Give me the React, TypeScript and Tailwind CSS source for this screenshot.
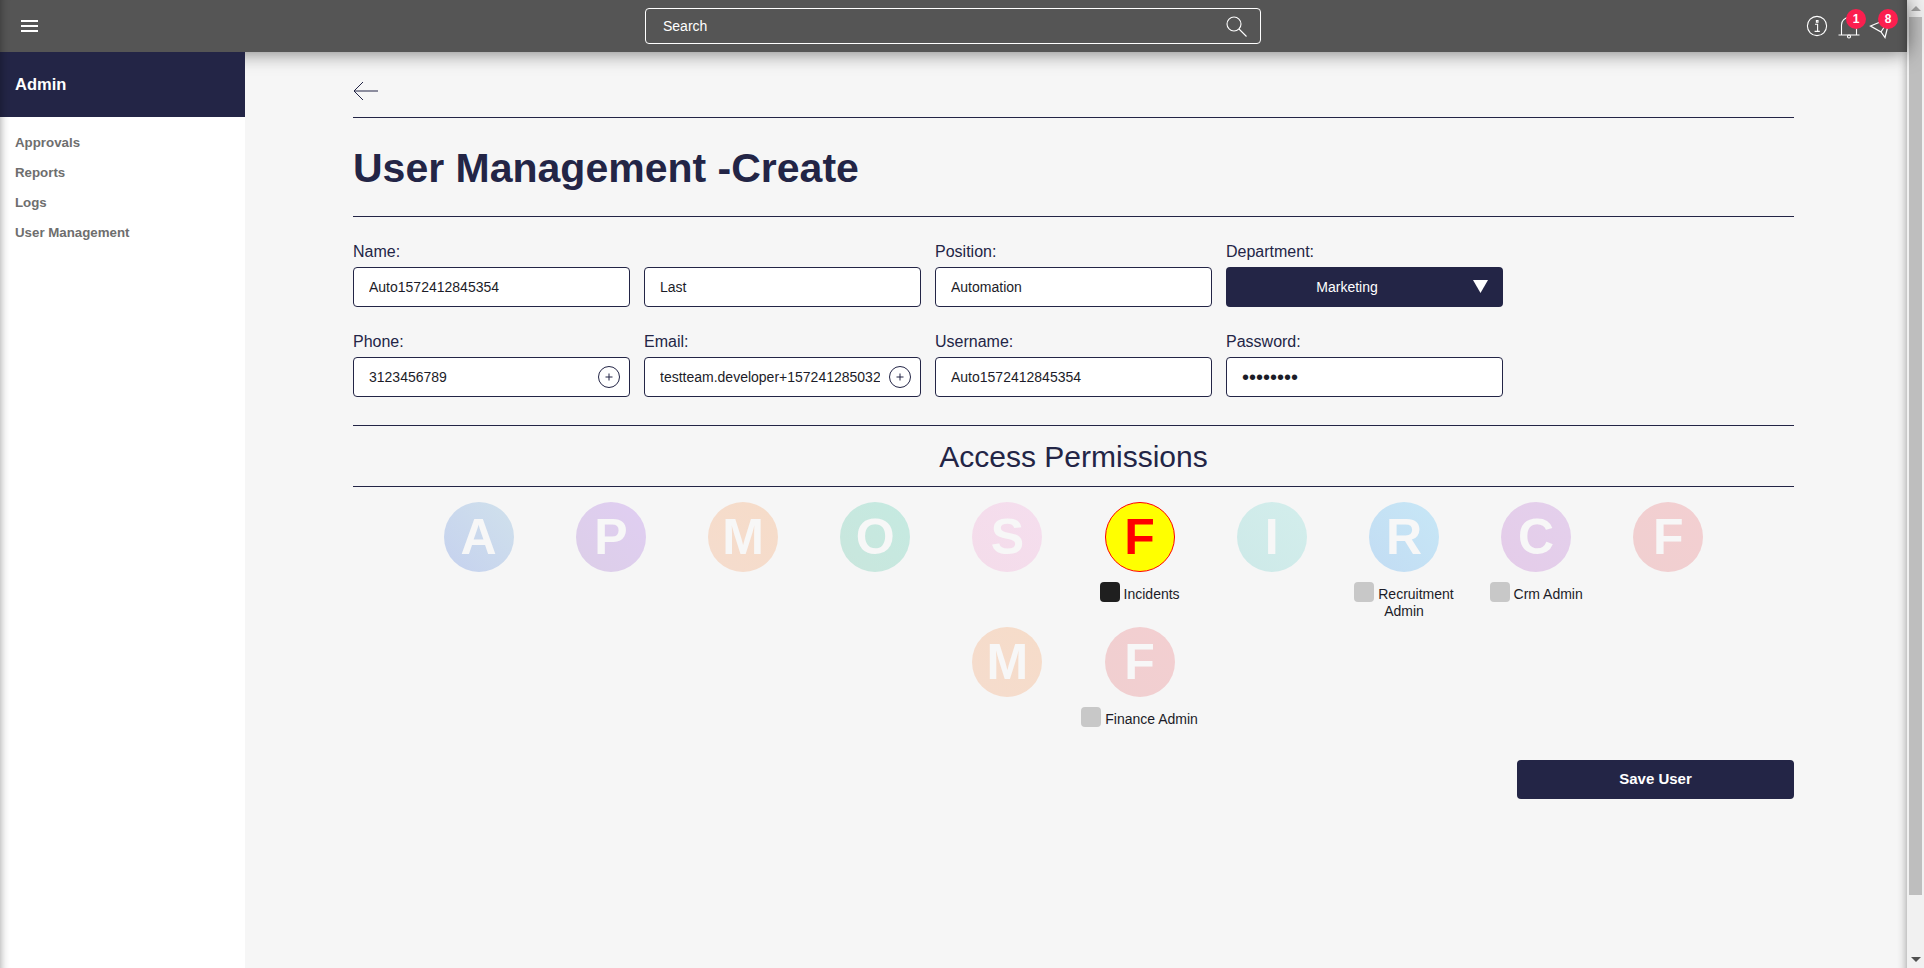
const navy = "#232546";

const circles = [
  { letter: "A", bg: "bg-linear-to-tr from-[#c5d1ee] to-[#d0e1ec]" },
  { letter: "P", bg: "bg-linear-to-tr from-[#dccee8] to-[#e0cef2]" },
  { letter: "M", bg: "bg-linear-to-tr from-[#f5dccd] to-[#f6dcc9]" },
  { letter: "O", bg: "bg-linear-to-tr from-[#c9e6dd] to-[#c5eae1]" },
  { letter: "S", bg: "bg-linear-to-tr from-[#f4dcea] to-[#f5deee]" },
  { letter: "F", selected: true, label: "Incidents", checked: true },
  { letter: "I", bg: "bg-linear-to-tr from-[#cde9e8] to-[#d3eeec]" },
  { letter: "R", bg: "bg-linear-to-tr from-[#c2dcf3] to-[#c7e7f6]", label: "Recruitment Admin" },
  { letter: "C", bg: "bg-linear-to-tr from-[#e4cce9] to-[#e4d0ec]", label: "Crm Admin" },
  { letter: "F", bg: "bg-linear-to-tr from-[#f0cfd0] to-[#f3cfd1]" },
  { letter: "M", bg: "bg-linear-to-tr from-[#f5dccd] to-[#f6dcc9]" },
  { letter: "F", bg: "bg-linear-to-tr from-[#f0cfd0] to-[#f3cfd1]", label: "Finance Admin" },
];

function Field({ label, value, plus, big }: { label?: string; value: string; plus?: boolean; big?: boolean }) {
  return (
    <div>
      <div className="h-[25px] pt-px text-base leading-[18px] text-[#232546]">{label}</div>
      <div
        className={
          big
            ? "flex h-10 items-center rounded border border-[#232546] bg-white pl-[15px] pr-[9px] text-[20px] text-[#1c1c28]"
            : "flex h-10 items-center rounded border border-[#232546] bg-white pl-[15px] pr-[9px] text-sm text-[#1c1c28]"
        }
      >
        <div className="min-w-0 flex-1 overflow-hidden whitespace-nowrap">{value}</div>
        {plus && (
          <div className="ml-[9px] flex h-[22px] w-[22px] shrink-0 items-center justify-center rounded-full border border-[#232546]">
            <svg width="10" height="10" viewBox="0 0 10 10" stroke={navy} strokeWidth="1">
              <path d="M5 1.5v7M1.5 5h7" />
            </svg>
          </div>
        )}
      </div>
    </div>
  );
}

function Badge({ n }: { n: number }) {
  return (
    <div className="absolute right-[-6px] top-[-6px] flex h-5 w-5 items-center justify-center rounded-full bg-[#fb1f4f] text-xs font-bold text-white">
      {n}
    </div>
  );
}

export default function App() {
  return (
    <div className="relative flex h-screen overflow-hidden bg-[#f6f6f6] font-['Liberation_Sans',Arial,sans-serif]">
      <div className="flex min-w-0 flex-1 flex-col">
        <header className="relative z-10 flex h-[52px] shrink-0 items-center bg-[#555555] shadow-[0_0_20px_rgba(0,0,0,0.55)]">
          <div className="ml-[21px] flex w-[17px] flex-col gap-[3px]">
            <div className="h-0.5 bg-white" />
            <div className="h-0.5 bg-white" />
            <div className="h-0.5 bg-white" />
          </div>
          <div className="ml-[607px] flex h-9 w-[616px] items-center justify-between rounded border border-white pl-[17px] pr-[13px] text-sm text-white">
            <span>Search</span>
            <svg width="21" height="21" viewBox="0 0 21 21" fill="none" stroke="white" strokeWidth="1.1">
              <circle cx="8" cy="8" r="7" />
              <path d="M13 13l7.5 7.5" />
            </svg>
          </div>
          <div className="ml-[545px] flex items-center">
            <svg width="22" height="22" viewBox="0 0 22 22" fill="none" stroke="white" strokeWidth="1.1">
              <circle cx="11" cy="11" r="9.6" />
              <path d="M9 9.2h2.6v7M8.6 16.4h5.2M10.4 5.6h1.6v1.6h-1.6z" />
            </svg>
            <div className="relative ml-[10px] h-[22px] w-[22px]">
              <svg className="overflow-visible" width="22" height="22" viewBox="0 0 22 22" fill="none" stroke="white" strokeWidth="1.1">
                <path d="M0.5 20h21M3.5 20V10a7.5 7.5 0 0 1 15 0v10" />
                <circle cx="11" cy="21.5" r="1.5" />
              </svg>
              <Badge n={1} />
            </div>
            <div className="relative ml-[10px] h-[22px] w-[22px]">
              <svg className="overflow-visible" width="22" height="22" viewBox="0 0 22 22" fill="none" stroke="white" strokeWidth="1.2">
                <path d="M0.5 11L20 3l-5 19.5-4-5.5zM11 17L20 3" />
              </svg>
              <Badge n={8} />
            </div>
          </div>
        </header>
        <div className="flex min-h-0 flex-1">
          <aside className="relative z-20 w-[245px] shrink-0 bg-white">
            <div className="flex h-[65px] items-center bg-[#232546] pl-[15px] text-[16.5px] font-bold text-white">Admin</div>
            <nav className="flex flex-col gap-[13px] pl-[15px] pt-[17px] text-[13.3px] font-bold leading-[17px] text-[#6e6e6e]">
              <div>Approvals</div>
              <div>Reports</div>
              <div>Logs</div>
              <div>User Management</div>
            </nav>
          </aside>
          <main className="min-w-0 flex-1 pl-[108px] pr-[113px]">
            <div className="flex h-[66px] items-center border-b border-[#232546] pt-[12px]">
              <svg width="26" height="20" viewBox="0 0 26 20" fill="none" stroke={navy} strokeWidth="1">
                <path d="M25 10H1M10 1l-9 9 9 9" />
              </svg>
            </div>
            <h1 className="flex h-[99px] items-center border-b border-[#232546] pt-1 text-[41px] font-bold text-[#232546]">
              User Management -Create
            </h1>
            <div className="grid grid-cols-5 gap-x-[14px] gap-y-[25px] pt-[25px]">
              <Field label="Name:" value="Auto1572412845354" />
              <Field value="Last" />
              <Field label="Position:" value="Automation" />
              <div>
                <div className="h-[25px] pt-px text-base leading-[18px] text-[#232546]">Department:</div>
                <div className="relative flex h-10 items-center justify-center rounded bg-[#232546] pr-[35px] text-sm text-white">
                  Marketing
                  <svg className="absolute right-[15px] top-[13px]" width="15" height="13" viewBox="0 0 15 13" fill="white">
                    <path d="M0 0h15L7.5 13z" />
                  </svg>
                </div>
              </div>
              <div />
              <Field label="Phone:" value="3123456789" plus />
              <Field label="Email:" value="testteam.developer+1572412850322" plus />
              <Field label="Username:" value="Auto1572412845354" />
              <Field label="Password:" value="••••••••" big />
            </div>
            <div className="mt-[28px] flex h-[62px] items-center justify-center border-y border-[#232546] text-[30px] text-[#232546]">
              Access Permissions
            </div>
            <div className="mx-auto mt-[15px] flex w-[1322px] flex-wrap justify-center">
              {circles.map((c, i) => (
                <div key={i} className="h-[125px] w-[132.2px] text-center">
                  <div
                    className={
                      c.selected
                        ? "mx-auto flex h-[70px] w-[70px] items-center justify-center rounded-full border border-[#ff0000] bg-[#ffff00] pt-px text-[50px] font-bold text-[#ff0000]"
                        : "mx-auto flex h-[70px] w-[70px] items-center justify-center rounded-full pt-px text-[50px] font-bold text-[#f7f7f7] " + c.bg
                    }
                  >
                    {c.letter}
                  </div>
                  {c.label && (
                    <div className="mt-[10px] text-sm leading-[17px] text-[#1c1c28]">
                      <span
                        className={
                          c.checked
                            ? "mr-1 inline-block h-5 w-5 rounded bg-[#1f1f1f] align-[-3px]"
                            : "mr-1 inline-block h-5 w-5 rounded bg-[#c8c8c8] align-[-3px]"
                        }
                      />
                      {c.label}
                    </div>
                  )}
                </div>
              ))}
            </div>
            <div className="mt-[8px] flex justify-end">
              <div className="flex h-[39px] w-[277px] items-center justify-center rounded bg-[#232546] text-[15px] font-bold text-white">
                Save User
              </div>
            </div>
          </main>
        </div>
      </div>
      <div className="flex w-[17px] shrink-0 flex-col items-center bg-[#f1f1f1]">
        <div className="flex h-[17px] items-center justify-center">
          <div className="h-0 w-0 border-x-[5px] border-b-[5px] border-x-transparent border-b-[#a3a3a3]" />
        </div>
        <div className="h-[878px] w-[13px] bg-[#bebebe]" />
        <div className="mt-auto flex h-[17px] items-center justify-center">
          <div className="h-0 w-0 border-x-[5px] border-t-[5px] border-x-transparent border-t-[#505050]" />
        </div>
      </div>
      <div className="pointer-events-none absolute inset-y-0 left-0 right-[17px] z-30 shadow-[inset_10px_0_10px_-10px_rgba(0,0,0,0.4),inset_-10px_0_10px_-10px_rgba(0,0,0,0.4)]" />
    </div>
  );
}
